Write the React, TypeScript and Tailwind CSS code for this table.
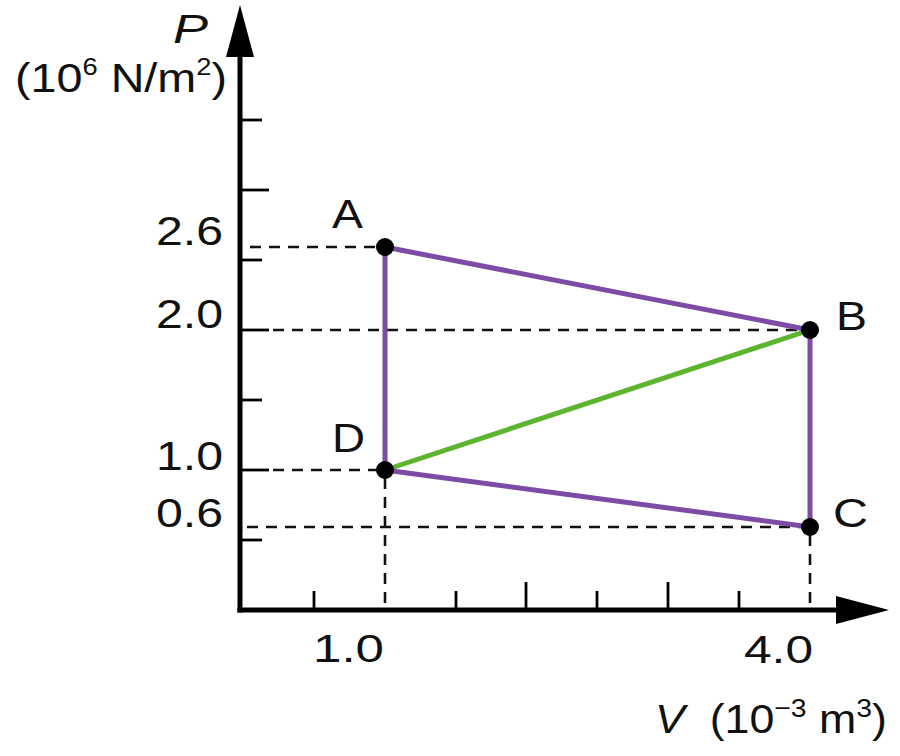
import React from "react";

const PURPLE = "#7b4ba6";
const GREEN = "#5db52f";

const Label = ({
  x,
  y,
  w,
  size = 41,
  italic = false,
  children,
}: {
  x: number;
  y: number;
  w: number;
  size?: number;
  italic?: boolean;
  children: React.ReactNode;
}) => (
  <text
    x={x}
    y={y}
    textLength={w}
    lengthAdjust="spacingAndGlyphs"
    fontSize={size}
    fontStyle={italic ? "italic" : "normal"}
    fill="#111"
  >
    {children}
  </text>
);

const PVChart = () => {
  const dash = { stroke: "#111", strokeWidth: 2.6, strokeDasharray: "11 8" };
  return (
    <svg
      width={900}
      height={756}
      viewBox="0 0 900 756"
      className="block font-['Liberation_Sans',Arial,sans-serif]"
    >
      {/* axes */}
      <line x1={240} y1={612.5} x2={240} y2={50} stroke="#000" strokeWidth={5} />
      <polygon points="240,5 226,57 254,57" fill="#000" />
      <line x1={237.5} y1={610} x2={840} y2={610} stroke="#000" strokeWidth={5} />
      <polygon points="889,610 836,596 836,624" fill="#000" />

      {/* y ticks */}
      {[120, 260, 400, 540].map((y) => (
        <line key={y} x1={240} y1={y} x2={262} y2={y} stroke="#000" strokeWidth={2.8} />
      ))}
      {[190, 330, 470].map((y) => (
        <line key={y} x1={240} y1={y} x2={269} y2={y} stroke="#000" strokeWidth={2.8} />
      ))}

      {/* x ticks */}
      {[314, 456, 597, 739].map((x) => (
        <line key={x} x1={x} y1={610} x2={x} y2={591} stroke="#000" strokeWidth={2.8} />
      ))}
      {[526, 668].map((x) => (
        <line key={x} x1={x} y1={610} x2={x} y2={582} stroke="#000" strokeWidth={2.8} />
      ))}

      {/* dashed guides */}
      <line x1={250} y1={247} x2={378} y2={247} {...dash} />
      <line x1={273} y1={330} x2={805} y2={330} {...dash} />
      <line x1={273} y1={470} x2={378} y2={470} {...dash} />
      <line x1={247} y1={527} x2={805} y2={527} {...dash} />
      <line x1={385} y1={478} x2={385} y2={608} {...dash} />
      <line x1={810} y1={535} x2={810} y2={608} {...dash} />

      {/* cycle */}
      <line x1={385} y1={470} x2={810} y2={330} stroke={GREEN} strokeWidth={5} />
      <polygon
        points="385,247 810,330 810,527 385,470"
        fill="none"
        stroke={PURPLE}
        strokeWidth={5}
        strokeLinejoin="round"
      />
      {[
        [385, 247],
        [810, 330],
        [810, 527],
        [385, 470],
      ].map(([cx, cy]) => (
        <circle key={`${cx}-${cy}`} cx={cx} cy={cy} r={9} fill="#000" />
      ))}

      {/* point labels */}
      <Label x={332} y={228} w={31}>A</Label>
      <Label x={836} y={330} w={31}>B</Label>
      <Label x={833} y={527} w={35}>C</Label>
      <Label x={332} y={452} w={33}>D</Label>

      {/* y values */}
      <Label x={156} y={245} w={67}>2.6</Label>
      <Label x={156} y={328} w={67}>2.0</Label>
      <Label x={156} y={470} w={67}>1.0</Label>
      <Label x={156} y={527} w={67}>0.6</Label>

      {/* x values */}
      <Label x={313} y={662} w={71} size={39}>1.0</Label>
      <Label x={744} y={663} w={69} size={39}>4.0</Label>

      {/* axis titles */}
      <Label x={173} y={43} w={35} italic>P</Label>
      <text
        x={15}
        y={92}
        textLength={212}
        lengthAdjust="spacingAndGlyphs"
        fontSize={41}
        fill="#111"
      >
        (10
        <tspan dy={-17} fontSize={24}>6</tspan>
        <tspan dy={17}> N/m</tspan>
        <tspan dy={-17} fontSize={24}>2</tspan>
        <tspan dy={17}>)</tspan>
      </text>
      <text
        x={655}
        y={733}
        textLength={232}
        lengthAdjust="spacingAndGlyphs"
        fontSize={41}
        fill="#111"
      >
        <tspan fontStyle="italic">V</tspan>
        <tspan>{"\u00a0\u00a0"}(10</tspan>
        <tspan dy={-16} fontSize={26}>{"\u2212"}3</tspan>
        <tspan dy={16}> m</tspan>
        <tspan dy={-16} fontSize={26}>3</tspan>
        <tspan dy={16}>)</tspan>
      </text>
    </svg>
  );
};

export default function App() {
  return (
    <div className="w-[900px] h-[756px] bg-white overflow-hidden">
      <PVChart />
    </div>
  );
}
